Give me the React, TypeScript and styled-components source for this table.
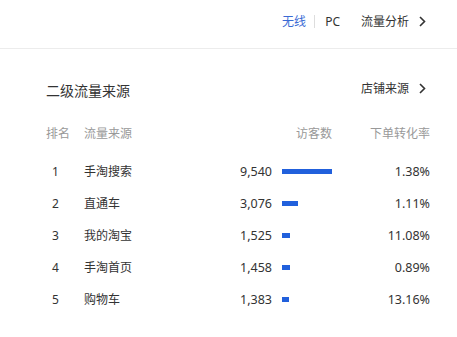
import React from 'react';
import styled, { createGlobalStyle } from 'styled-components';

interface SourceRow {
  rank: number;
  name: string;
  visitors: number;
  rate: string;
}

const rows: SourceRow[] = [
  { rank: 1, name: '手淘搜索', visitors: 9540, rate: '1.38%' },
  { rank: 2, name: '直通车', visitors: 3076, rate: '1.11%' },
  { rank: 3, name: '我的淘宝', visitors: 1525, rate: '11.08%' },
  { rank: 4, name: '手淘首页', visitors: 1458, rate: '0.89%' },
  { rank: 5, name: '购物车', visitors: 1383, rate: '13.16%' },
];

const BAR_MAX = 50;

const GlobalStyle = createGlobalStyle`
  html, body {
    margin: 0;
    padding: 0;
    background: #fff;
  }
  body {
    font-family: "Noto Sans", "Noto Sans CJK SC", sans-serif;
    color: #333;
    font-size: 12px;
  }
`;

const Chevron = () => (
  <SChevron viewBox="0 0 7 11" width="7" height="11">
    <polyline points="1,1 5.5,5.5 1,10" fill="none" stroke="#333" strokeWidth="1.6" />
  </SChevron>
);

export default function App() {
  const max = Math.max(...rows.map((r) => r.visitors));

  return (
    <SPage>
      <GlobalStyle />
      <STopBar>
        <STab active>无线</STab>
        <SSeparator />
        <STab>PC</STab>
        <SLink>
          流量分析
          <Chevron />
        </SLink>
      </STopBar>

      <SCard>
        <SCardHeader>
          <STitle>二级流量来源</STitle>
          <SMore>
            店铺来源
            <Chevron />
          </SMore>
        </SCardHeader>

        <STable>
          <SHeadCell>排名</SHeadCell>
          <SHeadCell>流量来源</SHeadCell>
          <SHeadCell align="right">访客数</SHeadCell>
          <SHeadCell align="right">下单转化率</SHeadCell>

          {rows.map((row) => (
            <React.Fragment key={row.rank}>
              <SRank>{row.rank}</SRank>
              <SName>{row.name}</SName>
              <SVisitors>
                <SNumber>{row.visitors.toLocaleString('en-US')}</SNumber>
                <SBarTrack>
                  <SBar style={{ width: Math.max(7, Math.round((row.visitors / max) * BAR_MAX)) }} />
                </SBarTrack>
              </SVisitors>
              <SRate>{row.rate}</SRate>
            </React.Fragment>
          ))}
        </STable>
      </SCard>
    </SPage>
  );
}

const SPage = styled.div`
  width: 457px;
  min-height: 337px;
  background: #fff;
`;

const STopBar = styled.div`
  height: 49px;
  box-sizing: border-box;
  display: flex;
  justify-content: flex-end;
  align-items: center;
  padding: 0 31px 5px 0;
  border-bottom: 1px solid #ececec;
`;

const STab = styled.span<{ active?: boolean }>`
  font-size: 12px;
  line-height: 16px;
  color: ${({ active }) => (active ? '#3a6ad4' : '#333')};
`;

const SSeparator = styled.span`
  width: 1px;
  height: 13px;
  background: #ddd;
  margin: 0 10px 0 8px;
`;

const SLink = styled.span`
  display: flex;
  align-items: center;
  margin-left: 21px;
  font-size: 12px;
  line-height: 16px;
  color: #333;
`;

const SChevron = styled.svg`
  margin-left: 10px;
  display: block;
`;

const SCard = styled.div`
  padding: 30px 27px 0 46px;
`;

const SCardHeader = styled.div`
  display: flex;
  justify-content: space-between;
  align-items: center;
  height: 24px;
  padding-right: 4px;
`;

const STitle = styled.h2`
  margin: 0;
  font-size: 14px;
  font-weight: normal;
  line-height: 24px;
  color: #333;
`;

const SMore = styled.span`
  display: flex;
  align-items: center;
  font-size: 12px;
  line-height: 16px;
  margin-top: -5px;
  color: #333;
`;

const STable = styled.div`
  display: grid;
  grid-template-columns: 38px 1fr 130px 98px;
  grid-template-rows: 31px;
  grid-auto-rows: 32px;
  align-items: center;
  margin-top: 21px;
`;

const SHeadCell = styled.div<{ align?: 'left' | 'right' }>`
  align-self: start;
  color: #999;
  font-size: 12px;
  line-height: 20px;
  text-align: ${({ align }) => align || 'left'};
`;

const SRank = styled.div`
  padding-left: 6px;
  font-size: 12px;
`;

const SName = styled.div`
  font-size: 12px;
`;

const SVisitors = styled.div`
  display: flex;
  align-items: center;
  justify-content: flex-end;
`;

const SNumber = styled.span`
  font-size: 12.5px;
`;

const SBarTrack = styled.div`
  width: 50px;
  margin-left: 10px;
`;

const SBar = styled.div`
  height: 5px;
  background: #2160dc;
`;

const SRate = styled.div`
  text-align: right;
  font-size: 12.5px;
`;
